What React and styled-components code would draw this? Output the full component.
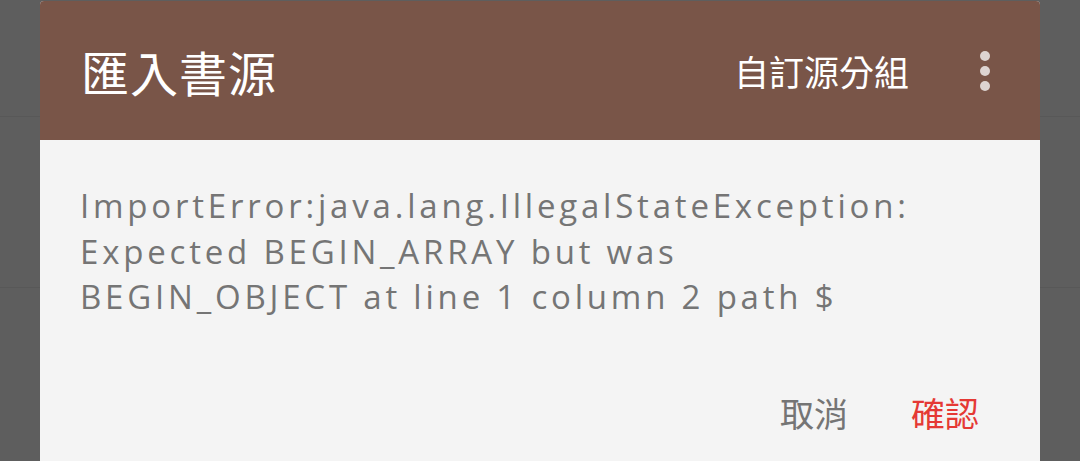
import React from 'react'
import styled, {createGlobalStyle} from 'styled-components'

const GlobalStyle = createGlobalStyle`
    html, body {
        margin: 0;
        padding: 0;
        background: #5e5e5e;
    }
    body {
        font-family: "Noto Sans CJK TC", "Noto Sans", sans-serif;
    }
`

const Screen = styled.div`
    position: relative;
    width: 1080px;
    height: 461px;
    overflow: hidden;
    background: #5e5e5e;
`

const BackRow = styled.div`
    height: ${p => p.h}px;
    border-bottom: 1px solid #585858;
`

const Dialog = styled.div`
    position: absolute;
    top: 1px;
    left: 40px;
    width: 1000px;
    height: 520px;
    display: flex;
    flex-direction: column;
    background: #f4f4f4;
    border-radius: 4px 4px 0 0;
    overflow: hidden;
`

const Header = styled.div`
    height: 139px;
    flex-shrink: 0;
    display: flex;
    align-items: center;
    padding: 0 50px 0 41px;
    background: #795548;
    color: #ffffff;
`

const Title = styled.h1`
    flex: 1;
    margin: 0;
    font-family: "Noto Sans CJK TC", sans-serif;
    font-size: 48px;
    font-weight: 400;
    line-height: 1;
    letter-spacing: 1px;
`

const Action = styled.span`
    font-family: "Noto Sans CJK TC", sans-serif;
    font-size: 35px;
    line-height: 1;
    margin-right: 71px;
`

const Dots = styled.div`
    display: flex;
    flex-direction: column;
    gap: 5px;
`

const Dot = styled.span`
    width: 10px;
    height: 10px;
    border-radius: 50%;
    background: rgba(255, 255, 255, 0.75);
`

const Body = styled.div`
    padding: 43px 40px 0 40px;
    display: flex;
    flex-direction: column;
`

const Message = styled.p`
    margin: 0;
    font-family: "Open Sans", sans-serif;
    font-size: 33px;
    line-height: 45.5px;
    letter-spacing: 3.8px;
    color: #757575;
`

const Buttons = styled.div`
    display: flex;
    justify-content: flex-end;
    gap: 63px;
    margin-top: 76px;
    padding-right: 21px;
`

const Button = styled.span`
    font-family: "Noto Sans CJK TC", sans-serif;
    font-size: 34px;
    line-height: 1;
    color: ${p => p.primary ? '#e53935' : '#757575'};
`

const App = () => {
    return (
        <Screen>
            <GlobalStyle/>
            <BackRow h={116}/>
            <BackRow h={170}/>
            <Dialog>
                <Header>
                    <Title>匯入書源</Title>
                    <Action>自訂源分組</Action>
                    <Dots>
                        <Dot/>
                        <Dot/>
                        <Dot/>
                    </Dots>
                </Header>
                <Body>
                    <Message>
                        ImportError:java.lang.IllegalStateException:<br/>
                        Expected BEGIN_ARRAY but was<br/>
                        BEGIN_OBJECT at line 1 column 2 path $
                    </Message>
                    <Buttons>
                        <Button>取消</Button>
                        <Button primary>確認</Button>
                    </Buttons>
                </Body>
            </Dialog>
        </Screen>
    )
}

export default App
